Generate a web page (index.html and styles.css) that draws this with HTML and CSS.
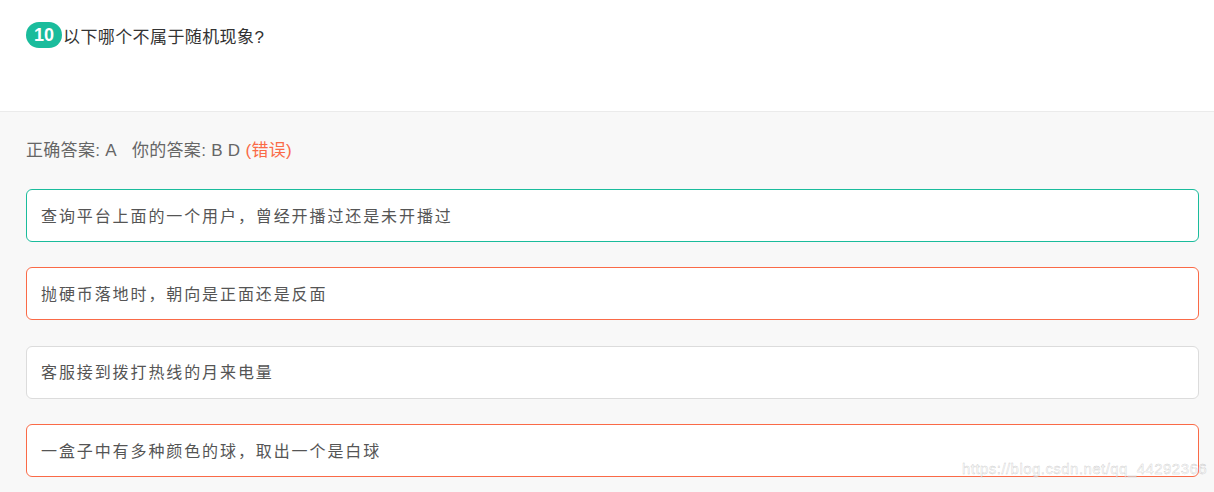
FILE: index.html
```html
<!DOCTYPE html>
<html lang="zh">
<head>
<meta charset="utf-8">
<link rel="stylesheet" href="styles.css">
</head>
<body>
<div class="page">
  <section class="question">
    <div class="q-row">
      <span class="badge">10</span>
      <span class="q-text">以下哪个不属于随机现象?</span>
    </div>
  </section>
  <section class="answers">
    <div class="result">正确答案: A&nbsp;&nbsp;&nbsp;你的答案: B D <span class="wrong">(错误)</span></div>
    <div class="options">
      <div class="option correct">查询平台上面的一个用户，曾经开播过还是未开播过</div>
      <div class="option chosen">抛硬币落地时，朝向是正面还是反面</div>
      <div class="option">客服接到拨打热线的月来电量</div>
      <div class="option chosen">一盒子中有多种颜色的球，取出一个是白球</div>
    </div>
  </section>
  <div class="watermark">https://blog.csdn.net/qq_44292366</div>
</div>
</body>
</html>
```

FILE: styles.css
```css
html, body {
  margin: 0;
  padding: 0;
  background: #f8f8f8;
}
.page {
  position: relative;
  width: 1214px;
  height: 492px;
  overflow: hidden;
  font-family: "Liberation Sans", "Noto Sans CJK SC", sans-serif;
}
.question {
  background: #fff;
  height: 112px;
  border-bottom: 1px solid #ebebeb;
  box-sizing: border-box;
  padding: 22px 0 0 26px;
}
.q-row {
  display: flex;
  align-items: center;
}
.badge {
  display: inline-flex;
  align-items: center;
  justify-content: center;
  width: 36px;
  height: 26px;
  border-radius: 13px;
  background: #1abc9c;
  color: #fff;
  font-size: 18px;
  font-weight: bold;
}
.q-text {
  margin-left: 1px;
  font-size: 17px;
  color: #333;
  letter-spacing: 0.4px;
}
.answers {
  padding: 27px 15px 0 26px;
}
.result {
  font-size: 17px;
  color: #666;
  line-height: 24px;
  letter-spacing: 0.3px;
}
.wrong {
  color: #fa6a47;
}
.options {
  margin-top: 26px;
  display: flex;
  flex-direction: column;
  gap: 25.4px;
}
.option {
  height: 53px;
  box-sizing: border-box;
  border: 1px solid #dcdcdc;
  border-radius: 6px;
  background: #fff;
  padding: 0 0 2px 14px;
  display: flex;
  align-items: center;
  font-size: 16px;
  color: #555;
  letter-spacing: 1.9px;
}
.option.correct {
  border-color: #1abc9c;
}
.option.chosen {
  border-color: #fa6a47;
}
.watermark {
  position: absolute;
  left: 962px;
  top: 460px;
  font-size: 15px;
  color: rgba(255, 255, 255, 0.6);
  -webkit-text-stroke: 0.4px rgba(150, 150, 150, 0.5);
  letter-spacing: 0.45px;
}
```
